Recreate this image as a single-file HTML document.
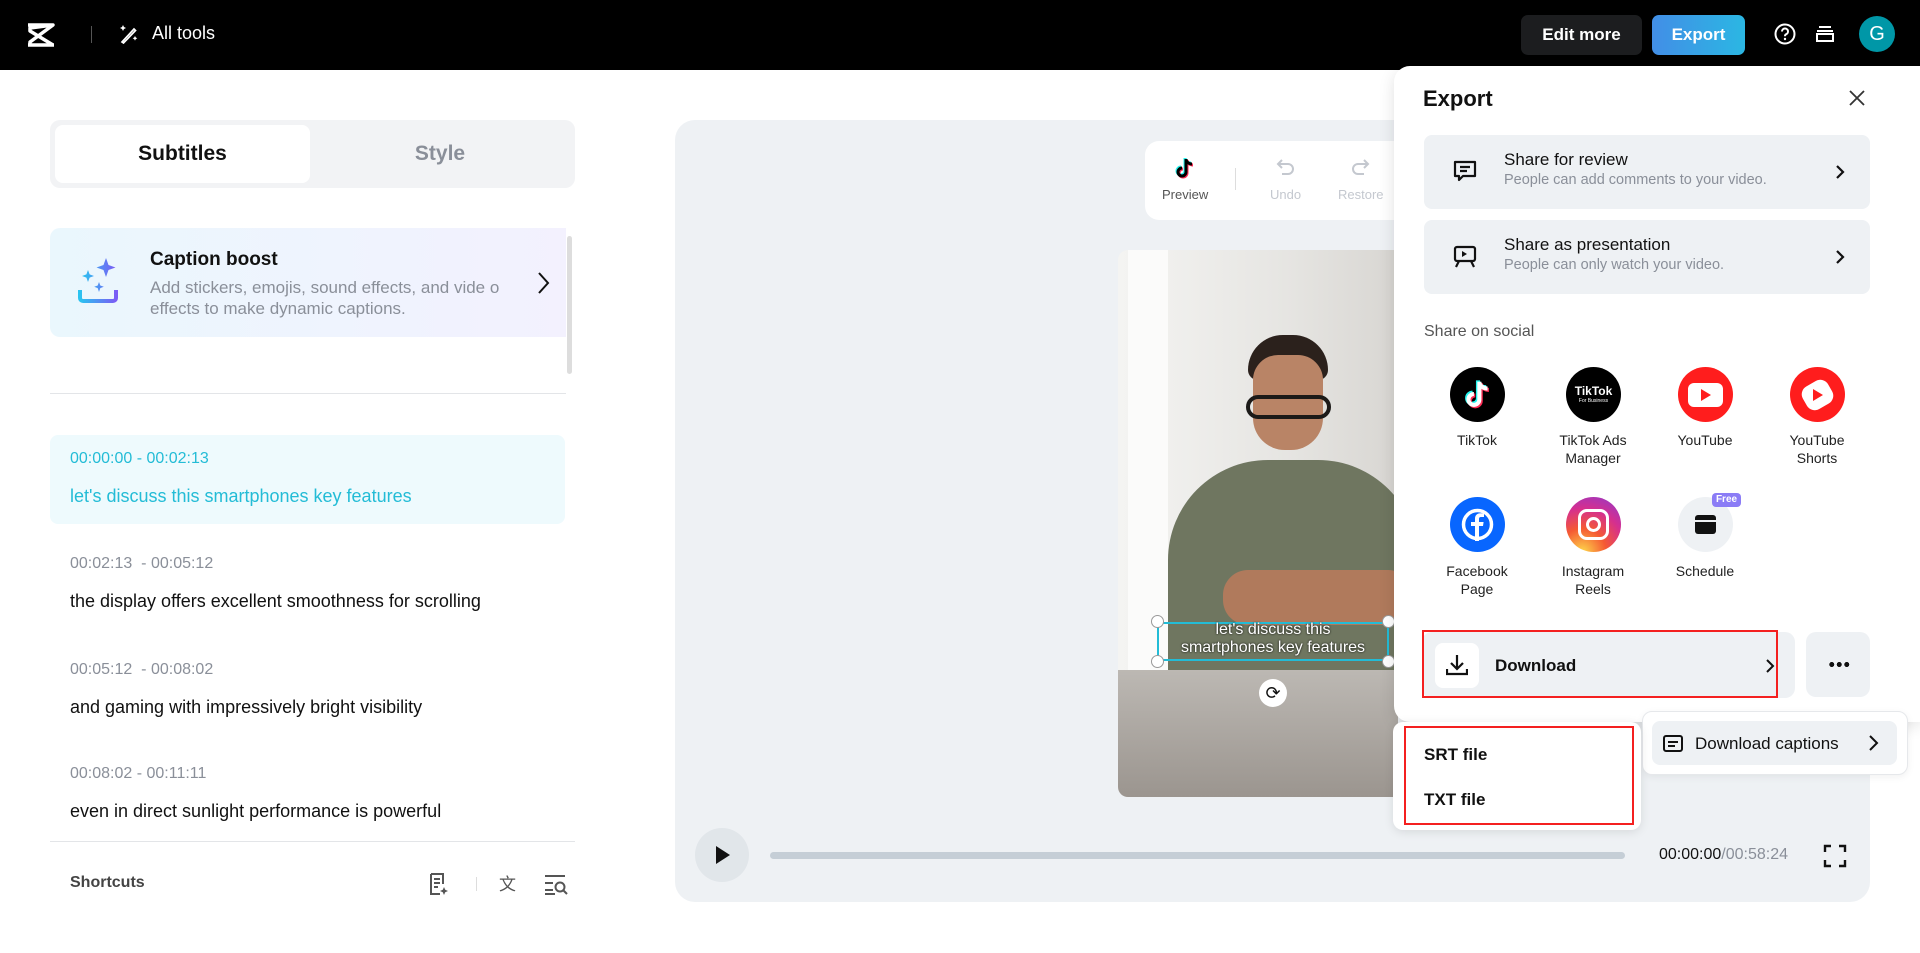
<!DOCTYPE html>
<html><head><meta charset="utf-8"><style>
*{box-sizing:border-box;margin:0;padding:0}
body{width:1920px;height:953px;overflow:hidden;background:#fff;font-family:"Liberation Sans",sans-serif;color:#111;position:relative}
.a{position:absolute}
.top{left:0;top:0;width:1920px;height:70px;background:#000}
.t{white-space:nowrap}
.card{background:#eef1f4;border-radius:8px}
.lbl{font-size:14px;color:#222;text-align:center;width:110px;line-height:18px}
.ic{width:55px;height:55px;border-radius:50%}
</style></head><body>
<div class="a top"></div>
<svg class="a" style="left:26px;top:22px" width="30" height="26" viewBox="0 0 30 26"><path d="M2 3h25L4 20v3h24M2 23h10M27 3L4 6v3l23 14" fill="none" stroke="#fff" stroke-width="3.5" stroke-linejoin="round"/></svg>
<div class="a" style="left:91px;top:26px;width:1px;height:17px;background:#555"></div>
<svg class="a" style="left:119px;top:24px" width="20" height="20" viewBox="0 0 20 20"><path d="M3 18L15 5l1.5 1.5L4.5 19z" fill="none" stroke="#fff" stroke-width="1.7"/><path d="M4 1l1 2 2 1-2 1-1 2-1-2-2-1 2-1zM16 12l.8 1.5 1.5.8-1.5.8-.8 1.5-.8-1.5-1.5-.8 1.5-.8z" fill="#fff"/></svg>
<div class="a t" style="left:152px;top:23px;font-size:18px;color:#fff">All tools</div>
<div class="a t" style="left:1521px;top:15px;width:121px;height:40px;background:#1c1d1f;border-radius:7px;color:#fff;font-weight:bold;font-size:17px;text-align:center;line-height:40px">Edit more</div>
<div class="a t" style="left:1652px;top:15px;width:93px;height:40px;background:linear-gradient(90deg,#428ee6,#2bb7e3);border-radius:7px;color:#fff;font-weight:bold;font-size:17px;text-align:center;line-height:40px">Export</div>
<svg class="a" style="left:1774px;top:23px" width="22" height="22" viewBox="0 0 22 22"><circle cx="11" cy="11" r="9.5" fill="none" stroke="#fff" stroke-width="2"/><path d="M8 8.5a3 3 0 1 1 4 2.8c-.8.4-1 1-1 2" fill="none" stroke="#fff" stroke-width="2"/><circle cx="11" cy="16" r="1.2" fill="#fff"/></svg>
<svg class="a" style="left:1815px;top:24px" width="20" height="20" viewBox="0 0 20 20"><path d="M4 3h12M2 7h16M2 10h16v7H2z" fill="none" stroke="#fff" stroke-width="2"/></svg>
<div class="a" style="left:1859px;top:16px;width:36px;height:36px;border-radius:50%;background:#0097a7;color:#fff;font-size:20px;text-align:center;line-height:36px">G</div>

<div class="a" style="left:50px;top:120px;width:525px;height:68px;background:#f2f3f5;border-radius:10px"></div>
<div class="a" style="left:55px;top:125px;width:255px;height:58px;background:#fff;border-radius:8px;font-weight:bold;font-size:21px;text-align:center;line-height:58px">Subtitles</div>
<div class="a" style="left:310px;top:125px;width:260px;height:58px;color:#8a8f99;font-weight:bold;font-size:21px;text-align:center;line-height:58px">Style</div>
<div class="a" style="left:50px;top:228px;width:516px;height:109px;border-radius:10px 0 0 10px;background:linear-gradient(90deg,#eaf7fd,#f3f1fe)"></div>
<svg class="a" style="left:76px;top:256px" width="44" height="52" viewBox="0 0 44 52"><defs><linearGradient id="g" x1="0" x2="1"><stop offset="0" stop-color="#2ac3f0"/><stop offset="1" stop-color="#7a5cf5"/></linearGradient></defs><path d="M30 2l2.5 7 7 2.5-7 2.5L30 21l-2.5-7-7-2.5 7-2.5zM12 14l1.6 4.4 4.4 1.6-4.4 1.6L12 26l-1.6-4.4L6 20l4.4-1.6zM23 26l1.3 3.5 3.5 1.3-3.5 1.3L23 36l-1.3-3.9-3.5-1.3 3.5-1.3z" fill="url(#g)"/><path d="M4 34v8a3 3 0 0 0 3 3h30a3 3 0 0 0 3-3v-8" fill="none" stroke="url(#g)" stroke-width="4"/></svg>
<div class="a t" style="left:150px;top:249px;font-weight:bold;font-size:19px">Caption boost</div>
<div class="a" style="left:150px;top:277px;width:362px;font-size:17px;line-height:21px;color:#8a8f99;word-break:break-all">Add stickers, emojis, sound effects, and vide o effects to make dynamic captions.</div>
<svg class="a" style="left:536px;top:271px" width="14" height="24" viewBox="0 0 14 24"><path d="M3 2l9 10-9 10" fill="none" stroke="#111" stroke-width="2"/></svg>
<div class="a" style="left:567px;top:236px;width:5px;height:138px;background:#ddd;border-radius:3px"></div>
<div class="a" style="left:50px;top:393px;width:516px;height:1px;background:#e3e5e8"></div>
<div class="a" style="left:50px;top:435px;width:515px;height:89px;background:#eefafd;border-radius:8px"></div>
<div class="a t" style="left:70px;top:450px;font-size:16px;color:#23bcd6">00:00:00 - 00:02:13</div>
<div class="a t" style="left:70px;top:486px;font-size:18px;color:#23bcd6">let's discuss this smartphones key features</div>
<div class="a t" style="left:70px;top:555px;font-size:16px;color:#8a8f99">00:02:13 &nbsp;- 00:05:12</div>
<div class="a t" style="left:70px;top:591px;font-size:18px">the display offers excellent smoothness for scrolling</div>
<div class="a t" style="left:70px;top:661px;font-size:16px;color:#8a8f99">00:05:12 &nbsp;- 00:08:02</div>
<div class="a t" style="left:70px;top:697px;font-size:18px">and gaming with impressively bright visibility</div>
<div class="a t" style="left:70px;top:765px;font-size:16px;color:#8a8f99">00:08:02 - 00:11:11</div>
<div class="a t" style="left:70px;top:801px;font-size:18px">even in direct sunlight performance is powerful</div>
<div class="a" style="left:50px;top:841px;width:525px;height:1px;background:#e3e5e8"></div>
<div class="a t" style="left:70px;top:874px;font-size:16px;font-weight:bold;color:#444">Shortcuts</div>
<svg class="a" style="left:428px;top:872px" width="100" height="24" viewBox="0 0 100 24"><path d="M3 2h12v10M3 2v20h9M6 7h6M6 11h6M6 15h4" fill="none" stroke="#555" stroke-width="2"/><path d="M16 15l1.2 2.8 2.8 1.2-2.8 1.2L16 23l-1.2-2.8L12 19l2.8-1.2z" fill="#555"/><rect x="48" y="5" width="1" height="14" fill="#ddd"/><text x="71" y="18" font-size="17" fill="#555" font-family="Liberation Sans">文</text></svg>
<svg class="a" style="left:544px;top:874px" width="26" height="22" viewBox="0 0 26 22"><path d="M1 2h20M1 9h8M1 16h8M1 20h10" stroke="#555" stroke-width="2"/><circle cx="16" cy="13" r="4.5" fill="none" stroke="#555" stroke-width="2"/><path d="M19 16l4 4" stroke="#555" stroke-width="2"/></svg>

<div class="a" style="left:675px;top:120px;width:1195px;height:782px;background:#eef1f4;border-radius:20px"></div>
<div class="a" style="left:1145px;top:141px;width:280px;height:79px;background:#fff;border-radius:14px"></div>
<svg class="a" style="left:1175px;top:157px" width="20" height="22" viewBox="0 0 20 22"><path d="M11 2v13a4 4 0 1 1-4-4M11 2c0 3 3 5 6 5" fill="none" stroke="#25f4ee" stroke-width="3" transform="translate(-1,-1)"/><path d="M11 2v13a4 4 0 1 1-4-4M11 2c0 3 3 5 6 5" fill="none" stroke="#fe2c55" stroke-width="3" transform="translate(1,1)"/><path d="M11 2v13a4 4 0 1 1-4-4M11 2c0 3 3 5 6 5" fill="none" stroke="#000" stroke-width="3"/></svg>
<div class="a t" style="left:1162px;top:187px;font-size:13px;color:#555">Preview</div>
<div class="a" style="left:1235px;top:168px;width:1px;height:22px;background:#ddd"></div>
<svg class="a" style="left:1276px;top:157px" width="20" height="20" viewBox="0 0 20 20"><path d="M6 3L2 7l4 4M2 7h10a5 5 0 0 1 0 10H6" fill="none" stroke="#c4c8cf" stroke-width="2"/></svg>
<div class="a t" style="left:1270px;top:187px;font-size:13px;color:#c4c8cf">Undo</div>
<svg class="a" style="left:1350px;top:157px" width="20" height="20" viewBox="0 0 20 20"><path d="M14 3l4 4-4 4M18 7H8a5 5 0 0 0 0 10h6" fill="none" stroke="#c4c8cf" stroke-width="2"/></svg>
<div class="a t" style="left:1338px;top:187px;font-size:13px;color:#c4c8cf">Restore</div>
<div class="a" style="left:1118px;top:250px;width:280px;height:547px;border-radius:10px 0 0 10px;overflow:hidden;background:linear-gradient(90deg,#f4f4f2,#e6e5e2 60%,#d8d6d2)">
 <div class="a" style="left:10px;top:0;width:40px;height:547px;background:#fbfbfa"></div>
 <div class="a" style="left:130px;top:85px;width:80px;height:45px;border-radius:35px 35px 10px 10px;background:#2b211c"></div>
 <div class="a" style="left:135px;top:105px;width:70px;height:95px;border-radius:25px 25px 32px 32px;background:#b98466"></div>
 <div class="a" style="left:128px;top:145px;width:85px;height:24px;border:4px solid #1c1a18;border-radius:12px"></div>
 <div class="a" style="left:50px;top:210px;width:250px;height:220px;border-radius:100px 100px 10px 10px;background:#6f7660"></div>
 <div class="a" style="left:105px;top:320px;width:190px;height:55px;border-radius:25px;background:#b07a5c"></div>
 <div class="a" style="left:0;top:420px;width:280px;height:127px;background:linear-gradient(180deg,#bcb8b3,#9b958f)"></div>
</div>
<div class="a" style="left:1157px;top:622px;width:232px;height:39px;border:2px solid #23bcd6"></div>
<div class="a" style="left:1157px;top:621px;width:232px;text-align:center;color:#fff;font-size:16px;line-height:18px;text-shadow:0 0 2px #000">let's discuss this<br>smartphones key features</div>
<div class="a" style="left:1151px;top:615px;width:13px;height:13px;border-radius:50%;background:#fff;border:1px solid #999"></div>
<div class="a" style="left:1151px;top:655px;width:13px;height:13px;border-radius:50%;background:#fff;border:1px solid #999"></div>
<div class="a" style="left:1382px;top:615px;width:13px;height:13px;border-radius:50%;background:#fff;border:1px solid #999"></div>
<div class="a" style="left:1382px;top:655px;width:13px;height:13px;border-radius:50%;background:#fff;border:1px solid #999"></div>
<div class="a" style="left:1259px;top:679px;width:28px;height:28px;border-radius:50%;background:#fff;text-align:center;line-height:28px;font-size:18px">⟳</div>
<div class="a" style="left:695px;top:828px;width:54px;height:54px;border-radius:50%;background:#e1e6ea"></div>
<svg class="a" style="left:714px;top:845px" width="18" height="20" viewBox="0 0 18 20"><path d="M2 1l14 9-14 9z" fill="#111"/></svg>
<div class="a" style="left:770px;top:852px;width:855px;height:7px;background:#c5ced6;border-radius:4px"></div>
<div class="a t" style="left:1659px;top:846px;font-size:16px;color:#111">00:00:00<span style="color:#8a8f99">/00:58:24</span></div>
<svg class="a" style="left:1823px;top:844px" width="24" height="24" viewBox="0 0 24 24"><path d="M2 8V2h6M16 2h6v6M22 16v6h-6M8 22H2v-6" fill="none" stroke="#111" stroke-width="2.4"/></svg>

<div class="a" style="left:1394px;top:66px;width:526px;height:656px;background:#fff;border-radius:16px 0 0 16px;box-shadow:0 4px 16px rgba(0,0,0,.12)"></div>
<div class="a t" style="left:1423px;top:86px;font-size:22px;font-weight:bold">Export</div>
<svg class="a" style="left:1849px;top:90px" width="16" height="16" viewBox="0 0 16 16"><path d="M1 1l14 14M15 1L1 15" stroke="#333" stroke-width="1.8"/></svg>
<div class="a card" style="left:1424px;top:135px;width:446px;height:74px"></div>
<svg class="a" style="left:1452px;top:159px" width="26" height="26" viewBox="0 0 26 26"><path d="M3 3h20v14H11l-4 4v-4H3z" fill="none" stroke="#111" stroke-width="2.2" stroke-linejoin="round"/><path d="M8 8h10M8 12h7" stroke="#111" stroke-width="2.2"/></svg>
<div class="a t" style="left:1504px;top:150px;font-size:17px;color:#111">Share for review</div>
<div class="a t" style="left:1504px;top:172px;font-size:14.5px;color:#8a8f99">People can add comments to your video.</div>
<svg class="a" style="left:1835px;top:164px" width="10" height="16" viewBox="0 0 10 16"><path d="M2 2l6 6-6 6" fill="none" stroke="#111" stroke-width="2.2"/></svg>
<div class="a card" style="left:1424px;top:220px;width:446px;height:74px"></div>
<svg class="a" style="left:1452px;top:244px" width="26" height="26" viewBox="0 0 26 26"><rect x="3" y="3" width="20" height="14" rx="2" fill="none" stroke="#111" stroke-width="2.2"/><path d="M10 7v6l5-3z" fill="#111"/><path d="M7 17l-3 6M19 17l3 6" stroke="#111" stroke-width="2.2"/></svg>
<div class="a t" style="left:1504px;top:235px;font-size:17px;color:#111">Share as presentation</div>
<div class="a t" style="left:1504px;top:257px;font-size:14.5px;color:#8a8f99">People can only watch your video.</div>
<svg class="a" style="left:1835px;top:249px" width="10" height="16" viewBox="0 0 10 16"><path d="M2 2l6 6-6 6" fill="none" stroke="#111" stroke-width="2.2"/></svg>
<div class="a t" style="left:1424px;top:323px;font-size:16px;color:#555">Share on social</div>
<div class="a ic" style="left:1450px;top:367px;background:#000"></div>
<svg class="a" style="left:1464px;top:379px" width="28" height="30" viewBox="0 0 20 22"><path d="M11 2v13a4 4 0 1 1-4-4M11 2c0 3 3 5 6 5" fill="none" stroke="#25f4ee" stroke-width="3" transform="translate(-1,-1)"/><path d="M11 2v13a4 4 0 1 1-4-4M11 2c0 3 3 5 6 5" fill="none" stroke="#fe2c55" stroke-width="3" transform="translate(1,1)"/><path d="M11 2v13a4 4 0 1 1-4-4M11 2c0 3 3 5 6 5" fill="none" stroke="#fff" stroke-width="3"/></svg>
<div class="a ic" style="left:1566px;top:367px;background:#000;color:#fff;text-align:center"><div style="font-size:12px;font-weight:bold;margin-top:17px">TikTok</div><div style="font-size:5px">For Business</div></div>
<div class="a ic" style="left:1678px;top:367px;background:#ff1d1d"></div>
<div class="a" style="left:1688px;top:383px;width:35px;height:24px;background:#fff;border-radius:6px"></div>
<svg class="a" style="left:1700px;top:388px" width="12" height="14"><path d="M1 1l10 6-10 6z" fill="#ff1d1d"/></svg>
<div class="a ic" style="left:1790px;top:367px;background:#ff1d1d"></div>
<div class="a" style="left:1803px;top:382px;width:29px;height:26px;background:#fff;border-radius:9px;transform:rotate(-30deg)"></div>
<svg class="a" style="left:1812px;top:388px" width="12" height="14"><path d="M1 1l10 6-10 6z" fill="#ff1d1d"/></svg>
<div class="a lbl" style="left:1422px;top:431px">TikTok</div>
<div class="a lbl" style="left:1538px;top:431px">TikTok Ads<br>Manager</div>
<div class="a lbl" style="left:1650px;top:431px">YouTube</div>
<div class="a lbl" style="left:1762px;top:431px">YouTube<br>Shorts</div>
<div class="a ic" style="left:1450px;top:497px;background:#0866ff"></div>
<svg class="a" style="left:1461px;top:508px" width="33" height="33" viewBox="0 0 33 33"><circle cx="16.5" cy="16.5" r="14" fill="none" stroke="#fff" stroke-width="3.5"/><path d="M18 33V18h4l.6-4H18v-3c0-1.2.5-2 2-2h3V5.5c-1-.1-2-.3-3.5-.3-3.5 0-5.5 2-5.5 5.5V14h-4v4h4v15z" fill="#fff"/></svg>
<div class="a ic" style="left:1566px;top:497px;background:radial-gradient(circle at 30% 100%,#fdd74a,#f55a33 35%,#d52f8f 65%,#8a3ad0)"></div>
<div class="a" style="left:1578px;top:509px;width:31px;height:31px;border:3.5px solid #fff;border-radius:9px"></div>
<div class="a" style="left:1586px;top:517px;width:15px;height:15px;border:3.5px solid #fff;border-radius:50%"></div>
<div class="a ic" style="left:1678px;top:497px;background:#eef1f4"></div>
<div class="a" style="left:1695px;top:515px;width:21px;height:19px;background:#111;border-radius:3px"></div>
<div class="a" style="left:1695px;top:520px;width:21px;height:2px;background:#eef1f4"></div>
<div class="a" style="left:1712px;top:493px;width:29px;height:14px;background:#8b7cf6;border-radius:4px;color:#fff;font-size:10px;font-weight:bold;text-align:center;line-height:14px">Free</div>
<div class="a lbl" style="left:1422px;top:562px">Facebook<br>Page</div>
<div class="a lbl" style="left:1538px;top:562px">Instagram<br>Reels</div>
<div class="a lbl" style="left:1650px;top:562px">Schedule</div>
<div class="a card" style="left:1422px;top:632px;width:373px;height:66px;border-radius:10px"></div>
<div class="a" style="left:1422px;top:630px;width:356px;height:68px;border:2px solid #f42020"></div>
<div class="a" style="left:1435px;top:643px;width:44px;height:45px;background:#fff;border-radius:8px"></div>
<svg class="a" style="left:1446px;top:654px" width="22" height="22" viewBox="0 0 22 22"><path d="M11 1v13M5 9l6 6 6-6M1 15v5h20v-5" fill="none" stroke="#111" stroke-width="2.2"/></svg>
<div class="a t" style="left:1495px;top:656px;font-size:17px;font-weight:bold">Download</div>
<svg class="a" style="left:1765px;top:658px" width="10" height="16" viewBox="0 0 10 16"><path d="M2 2l6 6-6 6" fill="none" stroke="#111" stroke-width="2"/></svg>
<div class="a card" style="left:1806px;top:632px;width:64px;height:65px;border-radius:10px"></div>
<div class="a" style="left:1828px;top:662px;width:22px;height:5px;background:radial-gradient(circle,#111 2.4px,transparent 2.6px) 0 0/7.5px 5px repeat-x"></div>
<div class="a" style="left:1642px;top:711px;width:266px;height:64px;background:#fff;border:1px solid #e6e8eb;border-radius:10px;box-shadow:0 2px 8px rgba(0,0,0,.06)"></div>
<div class="a card" style="left:1652px;top:721px;width:245px;height:44px"></div>
<svg class="a" style="left:1663px;top:735px" width="20" height="17" viewBox="0 0 20 17"><rect x="1" y="1" width="18" height="15" rx="2" fill="none" stroke="#111" stroke-width="2"/><path d="M5 7h10M5 11h7" stroke="#111" stroke-width="2"/></svg>
<div class="a t" style="left:1695px;top:734px;font-size:17px">Download captions</div>
<svg class="a" style="left:1868px;top:734px" width="11" height="18" viewBox="0 0 11 18"><path d="M2 2l7 7-7 7" fill="none" stroke="#111" stroke-width="2"/></svg>
<div class="a" style="left:1393px;top:722px;width:248px;height:108px;background:#fff;border-radius:10px;box-shadow:0 2px 10px rgba(0,0,0,.1)"></div>
<div class="a" style="left:1404px;top:726px;width:230px;height:99px;border:2px solid #f42020"></div>
<div class="a t" style="left:1424px;top:745px;font-size:17px;font-weight:bold">SRT file</div>
<div class="a t" style="left:1424px;top:790px;font-size:17px;font-weight:bold">TXT file</div>
</body></html>
